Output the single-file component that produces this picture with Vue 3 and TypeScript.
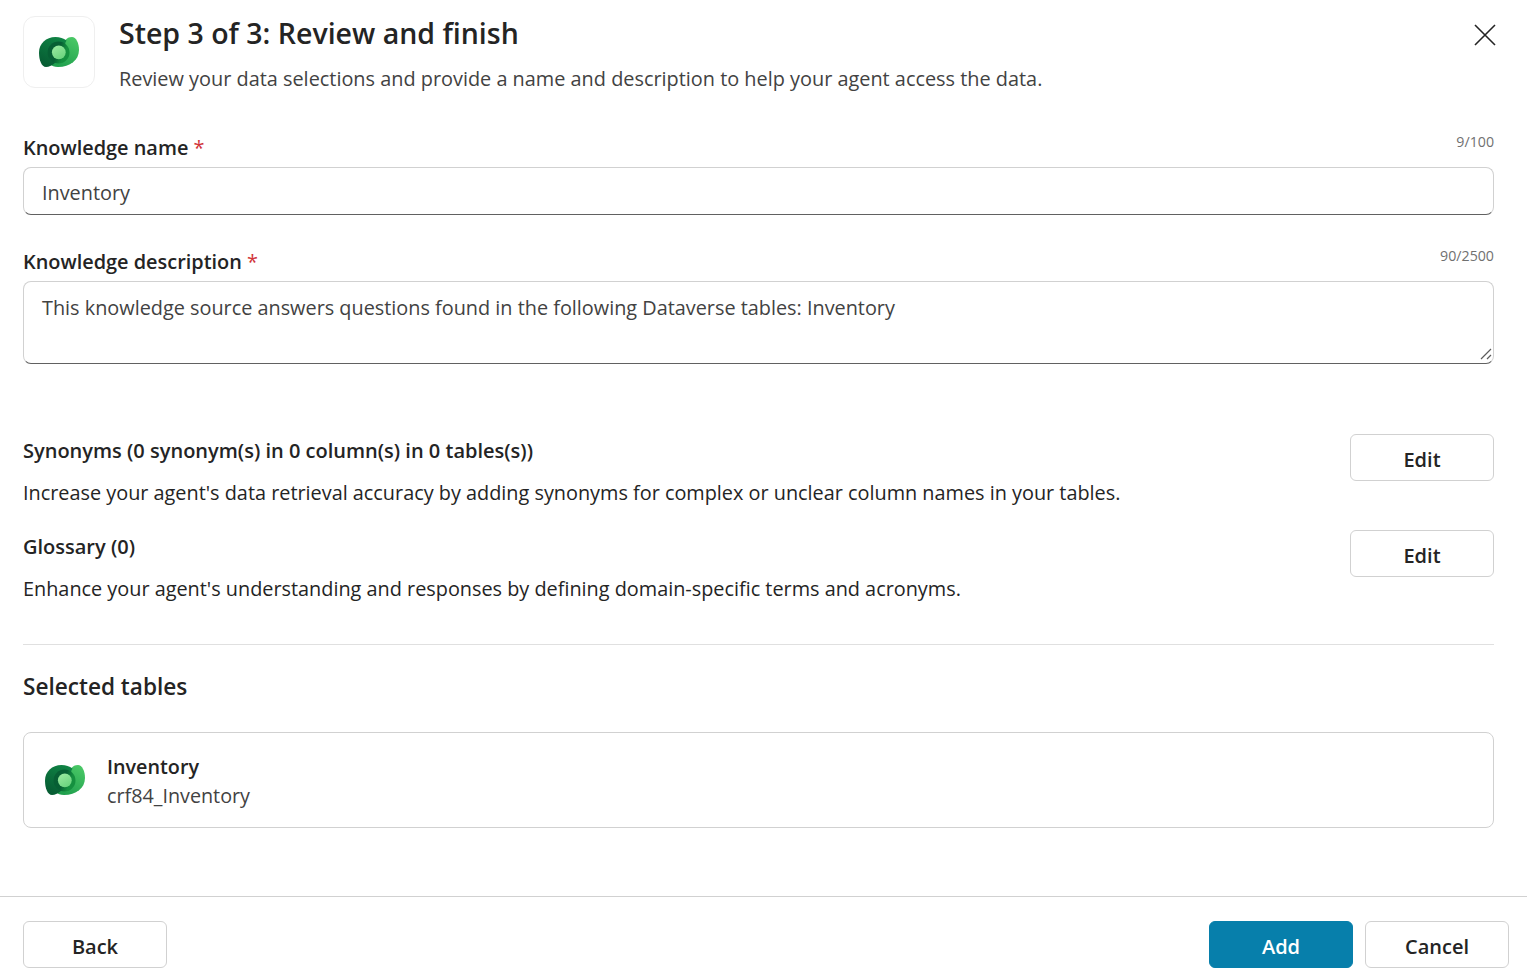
<script setup lang="ts">
interface Extra {
  title: string
  text: string
}

const extras: Extra[] = [
  {
    title: 'Synonyms (0 synonym(s) in 0 column(s) in 0 tables(s))',
    text: "Increase your agent's data retrieval accuracy by adding synonyms for complex or unclear column names in your tables.",
  },
  {
    title: 'Glossary (0)',
    text: "Enhance your agent's understanding and responses by defining domain-specific terms and acronyms.",
  },
]
</script>

<template>
  <div class="page">
    <header class="head">
      <div class="logo-box">
        <svg class="logo" viewBox="0 0 40 30" width="40" height="30">
          <defs>
            <linearGradient id="lgDark" x1="0.7" y1="0" x2="0.2" y2="1">
              <stop offset="0" stop-color="#0f8344" />
              <stop offset="1" stop-color="#065a32" />
            </linearGradient>
            <linearGradient id="lgRight" x1="0.8" y1="0" x2="0.3" y2="1">
              <stop offset="0" stop-color="#4ac866" />
              <stop offset="1" stop-color="#1f9f4d" />
            </linearGradient>
            <linearGradient id="lgRing" x1="0" y1="0.3" x2="1" y2="0.7">
              <stop offset="0.45" stop-color="#075f34" />
              <stop offset="0.75" stop-color="#15903f" />
            </linearGradient>
            <linearGradient id="lgCore" x1="0.2" y1="0" x2="0.8" y2="1">
              <stop offset="0" stop-color="#9aeaa0" />
              <stop offset="1" stop-color="#68d27c" />
            </linearGradient>
          </defs>
          <path fill="url(#lgRight)" d="M33 0C37 0 40 6 40 13C40 23 31 30 19 30C15 30 13 29 11.500 27.500L26 3.500C28 1 30 0 33 0Z" />
          <path fill="url(#lgDark)" d="M16.500 0C21 0 24.500 1.300 27.500 3.500L17 25C13.500 28.500 10 30 7 30C2.500 30 0 23 0 15.500C0 6.700 7 0 16.500 0Z" />
          <circle cx="19.500" cy="15.500" r="11" fill="url(#lgRing)" />
          <circle cx="19.800" cy="15.300" r="6.900" fill="url(#lgCore)" />
        </svg>
      </div>
      <div class="head-text">
        <h1>Step 3 of 3: Review and finish</h1>
        <p>Review your data selections and provide a name and description to help your agent access the data.</p>
      </div>
      <button class="close" aria-label="Close">
        <svg viewBox="0 0 22 22" width="22" height="22">
          <path d="M1 1L21 21M21 1L1 21" stroke="#242424" stroke-width="1.600" fill="none" />
        </svg>
      </button>
    </header>

    <main class="form">
      <div class="field">
        <div class="label-row">
          <label>Knowledge name <span class="req">*</span></label>
          <span class="count">9/100</span>
        </div>
        <div class="input">Inventory</div>
      </div>

      <div class="field">
        <div class="label-row">
          <label>Knowledge description <span class="req">*</span></label>
          <span class="count">90/2500</span>
        </div>
        <div class="input area">
          This knowledge source answers questions found in the following Dataverse tables: Inventory
          <svg class="grip" viewBox="0 0 12 12" width="12" height="12">
            <path d="M1 11L11 1M7 11L11 7" stroke="#5c5c5c" stroke-width="1.200" fill="none" />
          </svg>
        </div>
      </div>

      <div class="extras">
        <div v-for="item in extras" :key="item.title" class="extra">
          <div class="extra-text">
            <h3>{{ item.title }}</h3>
            <p>{{ item.text }}</p>
          </div>
          <button class="btn">Edit</button>
        </div>
      </div>

      <hr class="divider" />

      <h2>Selected tables</h2>

      <div class="table-card">
        <svg class="logo" viewBox="0 0 40 30" width="40" height="30">
          <path fill="url(#lgRight)" d="M33 0C37 0 40 6 40 13C40 23 31 30 19 30C15 30 13 29 11.500 27.500L26 3.500C28 1 30 0 33 0Z" />
          <path fill="url(#lgDark)" d="M16.500 0C21 0 24.500 1.300 27.500 3.500L17 25C13.500 28.500 10 30 7 30C2.500 30 0 23 0 15.500C0 6.700 7 0 16.500 0Z" />
          <circle cx="19.500" cy="15.500" r="11" fill="url(#lgRing)" />
          <circle cx="19.800" cy="15.300" r="6.900" fill="url(#lgCore)" />
        </svg>
        <div class="table-text">
          <strong>Inventory</strong>
          <span>crf84_Inventory</span>
        </div>
      </div>
    </main>

    <footer class="foot">
      <button class="btn">Back</button>
      <div class="foot-right">
        <button class="btn primary">Add</button>
        <button class="btn">Cancel</button>
      </div>
    </footer>
  </div>
</template>

<style>
html, body {
  margin: 0;
  background: #fff;
  overflow: hidden;
}
</style>

<style scoped>
.page {
  width: 1527px;
  height: 978px;
  display: flex;
  flex-direction: column;
  font-family: "Open Sans", "Noto Sans", sans-serif;
  color: #242424;
  background: #fff;
}

.head {
  display: flex;
  padding: 16px 33px 0 23px;
  height: 122px;
  box-sizing: border-box;
}

.logo-box {
  width: 72px;
  height: 72px;
  box-sizing: border-box;
  border: 1px solid #efefef;
  border-radius: 12px;
  display: flex;
  align-items: center;
  justify-content: center;
  margin-right: 24px;
}

.head-text {
  flex: 1;
}

h1 {
  margin: -1px 0 0;
  font-size: 28.500px;
  line-height: 36px;
  font-weight: 600;
}

.head-text p {
  margin: 14px 0 0;
  font-size: 19.890px;
  line-height: 28px;
  color: #424242;
}

.close {
  background: none;
  border: 0;
  padding: 0;
  height: 22px;
  margin: 8px -2px 0 0;
}

.form {
  flex: 1;
  padding: 0 33px 0 23px;
}

.field {
  margin-bottom: 21px;
}

.label-row {
  display: flex;
  justify-content: space-between;
  height: 45px;
  box-sizing: border-box;
  padding-top: 10px;
}

label {
  font-size: 19.900px;
  line-height: 28px;
  font-weight: 600;
  margin-top: 2px;
}

.req {
  color: #d13438;
  font-weight: 400;
}

.count {
  font-size: 14.200px;
  line-height: 18px;
  margin-top: 1px;
  color: #707070;
}

.input {
  height: 48px;
  box-sizing: border-box;
  border: 1px solid #d1d1d1;
  border-bottom-color: #616161;
  border-radius: 8px;
  padding: 11px 18px 0;
  font-size: 19.850px;
  line-height: 28px;
  color: #424242;
}

.area {
  height: 83px;
  padding-top: 12px;
  position: relative;
}

.grip {
  position: absolute;
  right: 1px;
  bottom: 3px;
}

.extras {
  padding-top: 49px;
}

.extra {
  display: flex;
  justify-content: space-between;
  height: 96px;
}

h3 {
  margin: 0;
  font-size: 20px;
  line-height: 28px;
  font-weight: 600;
  padding-top: 3px;
}

.extra-text p {
  margin: 14px 0 0;
  font-size: 19.850px;
  line-height: 28px;
}

.btn {
  width: 144px;
  height: 47px;
  box-sizing: border-box;
  padding: 3px 0 0;
  background: #fff;
  border: 1px solid #d1d1d1;
  border-radius: 6px;
  font: 600 20px "Open Sans", "Noto Sans", sans-serif;
  color: #242424;
}

.primary {
  background: #077fab;
  border-color: #077fab;
  color: #fff;
}

.divider {
  border: 0;
  border-top: 1px solid #e0e0e0;
  margin: 18px 0 0;
}

h2 {
  margin: 24px 0 0;
  font-size: 22.600px;
  line-height: 36px;
  font-weight: 600;
}

.table-card {
  margin-top: 27px;
  height: 96px;
  box-sizing: border-box;
  border: 1px solid #d1d1d1;
  border-radius: 8px;
  display: flex;
  align-items: center;
  padding-left: 21px;
  gap: 22px;
}

.table-text {
  display: flex;
  flex-direction: column;
  font-size: 19.750px;
  line-height: 29px;
  padding-top: 2px;
}

.table-text strong {
  font-weight: 600;
}

.table-text span {
  color: #424242;
}

.foot {
  height: 82px;
  box-sizing: border-box;
  border-top: 1px solid #d1d1d1;
  padding: 24px 18px 0 23px;
  display: flex;
  justify-content: space-between;
  align-items: flex-start;
}

.foot-right {
  display: flex;
  gap: 12px;
}
</style>
